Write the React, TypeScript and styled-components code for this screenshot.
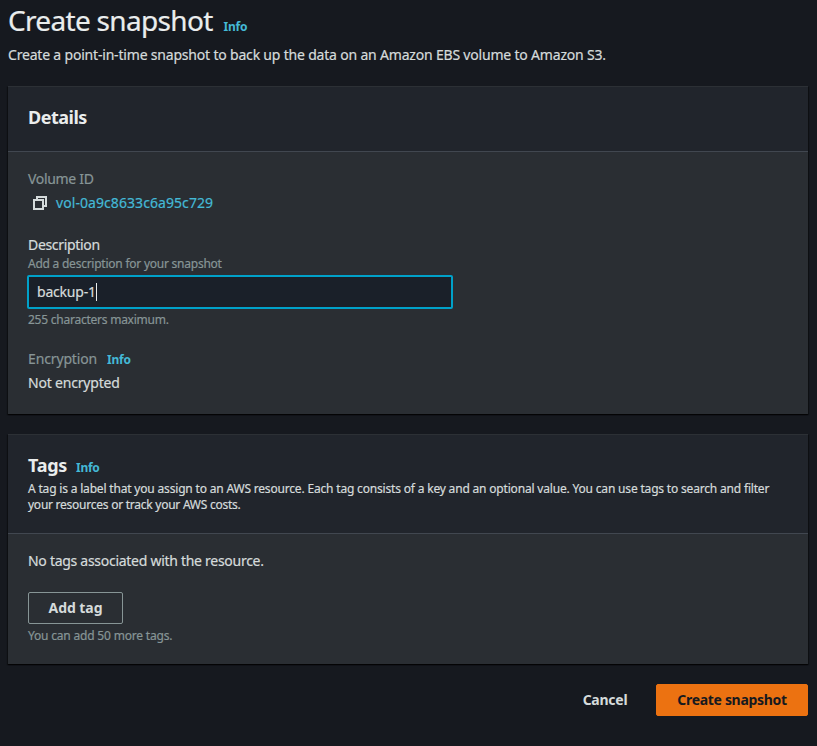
import React, { useState } from 'react';
import styled, { createGlobalStyle } from 'styled-components';

const GlobalStyle = createGlobalStyle`
  *, *::before, *::after { box-sizing: border-box; }
  html, body { margin: 0; background: #16191f; }
  body {
    font-family: "Noto Sans", "Open Sans", sans-serif;
    font-size: 14px;
    line-height: 22px;
    color: #d5dbdb;
    -webkit-text-stroke: 0.2px currentColor;
  }
  h1, h2, p { margin: 0; }
`;

const Page = styled.main`
  display: flex;
  flex-direction: column;
  min-height: 746px;
  padding: 2px 9px 0 8px;
`;

const PageHeader = styled.header`
  display: flex;
  flex-direction: column;
  gap: 6px;
  margin-bottom: 20px;
`;

const TitleRow = styled.div<{ $gap?: number }>`
  display: flex;
  align-items: baseline;
  gap: ${({ $gap = 10 }) => $gap}px;
`;

const PageTitle = styled.h1`
  font-size: 28px;
  line-height: 36px;
  font-weight: 400;
  letter-spacing: -0.68px;
  color: #eaeded;
`;

const InfoLink = styled.a`
  font-size: 12px;
  line-height: 16px;
  font-weight: 700;
  letter-spacing: -0.25px;
  color: #44b9d6;
  text-decoration: none;
  cursor: pointer;
  -webkit-text-stroke: 0;
`;

const Text = styled.p<{ $tracking?: number }>`
  letter-spacing: ${({ $tracking = -0.19 }) => $tracking}px;
  white-space: nowrap;
`;

const Panel = styled.section`
  background: #2a2e33;
  border-top: 1px solid #2c3035;
  box-shadow: 0 1px 1px 0 rgba(0, 0, 0, 0.6), 1px 1px 1px 0 rgba(0, 0, 0, 0.3), -1px 1px 1px 0 rgba(0, 0, 0, 0.3);
  margin-bottom: 20px;
`;

const PanelHeader = styled.div<{ $height: number }>`
  height: ${({ $height }) => $height}px;
  padding: 19px 20px 0;
  background: #21252c;
  border-bottom: 1px solid #414750;
`;

const PanelTitle = styled.h2<{ $tracking: number }>`
  font-size: 18px;
  line-height: 22px;
  font-weight: 700;
  letter-spacing: ${({ $tracking }) => $tracking}px;
  color: #eaeded;
  -webkit-text-stroke: 0;
`;

const PanelDescription = styled.p`
  margin-top: 5px;
  font-size: 12px;
  line-height: 16px;
  letter-spacing: -0.18px;
`;

const LastLine = styled.span`
  letter-spacing: -0.25px;
`;

const PanelBody = styled.div`
  padding: 16px 20px 20px;
`;

const Field = styled.div`
  & + & { margin-top: 20px; }
`;

const Label = styled.div<{ $muted?: boolean; $tracking?: number }>`
  letter-spacing: ${({ $tracking = -0.32 }) => $tracking}px;
  color: ${({ $muted }) => ($muted ? '#879596' : '#d5dbdb')};
`;

const ValueRow = styled.div<{ $inset?: number }>`
  display: flex;
  align-items: center;
  gap: 8px;
  margin-top: 2px;
  padding-left: ${({ $inset = 0 }) => $inset}px;
`;

const CopyIcon = styled.svg`
  display: block;
  width: 16px;
  height: 16px;
  fill: none;
  stroke: #d5dbdb;
  stroke-width: 2;
`;

const ResourceLink = styled.a`
  letter-spacing: 0.07px;
  color: #44b9d6;
  cursor: pointer;
`;

const Hint = styled.div<{ $top?: number; $tracking?: number }>`
  margin-top: ${({ $top = 0 }) => $top}px;
  font-size: 12px;
  line-height: 16px;
  letter-spacing: ${({ $tracking = -0.24 }) => $tracking}px;
  color: #879596;
`;

const InputFrame = styled.div`
  display: flex;
  align-items: center;
  width: 426px;
  height: 34px;
  margin: 3px 0 0 -1px;
  padding: 0 8px;
  background: #1a2029;
  border: 2px solid #00a1c9;
  border-radius: 2px;
`;

const Caret = styled.span`
  width: 1px;
  height: 18px;
  background: #eaeded;
`;

const Button = styled.button<{ $kind: 'normal' | 'link' | 'primary'; $width: number; $tracking: number }>`
  display: block;
  width: ${({ $width }) => $width}px;
  height: 32px;
  padding: 0;
  font: 700 14px/20px "Noto Sans", "Open Sans", sans-serif;
  letter-spacing: ${({ $tracking }) => $tracking}px;
  border: 1px solid
    ${({ $kind }) => ({ normal: '#879596', link: 'transparent', primary: '#ec7211' })[$kind]};
  border-radius: 2px;
  background: ${({ $kind }) => ($kind === 'primary' ? '#ec7211' : 'transparent')};
  color: ${({ $kind }) => ($kind === 'primary' ? '#16191f' : '#d5dbdb')};
  cursor: pointer;
  -webkit-text-stroke: 0;
`;

const AddTagRow = styled.div`
  margin-top: 20px;
`;

const Actions = styled.footer`
  display: flex;
  justify-content: flex-end;
  gap: 7px;
`;

export default function App() {
  const [description] = useState('backup-1');

  return (
    <>
      <GlobalStyle />
      <Page>
        <PageHeader>
          <TitleRow $gap={11}>
            <PageTitle>Create snapshot</PageTitle>
            <InfoLink>Info</InfoLink>
          </TitleRow>
          <Text>Create a point-in-time snapshot to back up the data on an Amazon EBS volume to Amazon S3.</Text>
        </PageHeader>

        <Panel>
          <PanelHeader $height={65}>
            <PanelTitle $tracking={-0.5}>Details</PanelTitle>
          </PanelHeader>
          <PanelBody>
            <Field>
              <Label $muted>Volume ID</Label>
              <ValueRow $inset={4}>
                <CopyIcon viewBox="0 0 16 16" aria-hidden="true">
                  <path d="M2 5h9v9H2z" />
                  <path d="M5 5V2h9v9h-3" />
                </CopyIcon>
                <ResourceLink>vol-0a9c8633c6a95c729</ResourceLink>
              </ValueRow>
            </Field>
            <Field>
              <Label>Description</Label>
              <Hint>Add a description for your snapshot</Hint>
              <InputFrame>
                <Text $tracking={-0.2}>{description}</Text>
                <Caret />
              </InputFrame>
              <Hint $top={3}>255 characters maximum.</Hint>
            </Field>
            <Field>
              <TitleRow>
                <Label $muted $tracking={-0.14}>Encryption</Label>
                <InfoLink>Info</InfoLink>
              </TitleRow>
              <ValueRow>
                <Text>Not encrypted</Text>
              </ValueRow>
            </Field>
          </PanelBody>
        </Panel>

        <Panel>
          <PanelHeader $height={99}>
            <TitleRow $gap={9}>
              <PanelTitle $tracking={-0.29}>Tags</PanelTitle>
              <InfoLink>Info</InfoLink>
            </TitleRow>
            <PanelDescription>
              A tag is a label that you assign to an AWS resource. Each tag consists of a key and an optional value. You
              can use tags to search and filter <LastLine>your resources or track your AWS costs.</LastLine>
            </PanelDescription>
          </PanelHeader>
          <PanelBody>
            <Text $tracking={-0.28}>No tags associated with the resource.</Text>
            <AddTagRow>
              <Button $kind="normal" $width={95} $tracking={-0.05}>Add tag</Button>
              <Hint $top={4} $tracking={-0.19}>You can add 50 more tags.</Hint>
            </AddTagRow>
          </PanelBody>
        </Panel>

        <Actions>
          <Button $kind="link" $width={88} $tracking={-0.25}>Cancel</Button>
          <Button $kind="primary" $width={152} $tracking={-0.32}>Create snapshot</Button>
        </Actions>
      </Page>
    </>
  );
}
